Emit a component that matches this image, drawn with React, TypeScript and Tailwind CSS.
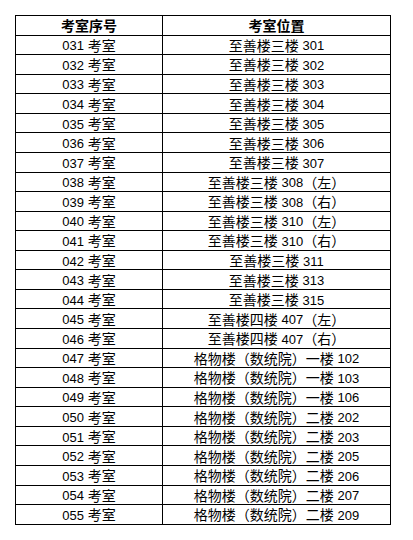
import { Fragment } from "react";

const rooms: [string, string][] = [
  ["031 考室", "至善楼三楼 301"],
  ["032 考室", "至善楼三楼 302"],
  ["033 考室", "至善楼三楼 303"],
  ["034 考室", "至善楼三楼 304"],
  ["035 考室", "至善楼三楼 305"],
  ["036 考室", "至善楼三楼 306"],
  ["037 考室", "至善楼三楼 307"],
  ["038 考室", "至善楼三楼 308（左）"],
  ["039 考室", "至善楼三楼 308（右）"],
  ["040 考室", "至善楼三楼 310（左）"],
  ["041 考室", "至善楼三楼 310（右）"],
  ["042 考室", "至善楼三楼 311"],
  ["043 考室", "至善楼三楼 313"],
  ["044 考室", "至善楼三楼 315"],
  ["045 考室", "至善楼四楼 407（左）"],
  ["046 考室", "至善楼四楼 407（右）"],
  ["047 考室", "格物楼（数统院）一楼 102"],
  ["048 考室", "格物楼（数统院）一楼 103"],
  ["049 考室", "格物楼（数统院）一楼 106"],
  ["050 考室", "格物楼（数统院）二楼 202"],
  ["051 考室", "格物楼（数统院）二楼 203"],
  ["052 考室", "格物楼（数统院）二楼 205"],
  ["053 考室", "格物楼（数统院）二楼 206"],
  ["054 考室", "格物楼（数统院）二楼 207"],
  ["055 考室", "格物楼（数统院）二楼 209"],
];

// digits are drawn a little smaller so they sit like the narrow figures in the sheet
const Cell = ({ text }: { text: string }) => (
  <>
    {text.split(/(\d+)/).map((part, i) =>
      /^\d+$/.test(part) ? (
        <span key={i} className="text-[13px]">
          {part}
        </span>
      ) : (
        <Fragment key={i}>{part}</Fragment>
      )
    )}
  </>
);

export default function App() {
  return (
    <div
      className="bg-white w-[413px] h-[540px] pt-[15px] pl-[15px] text-black text-[14px] leading-none"
      style={{ fontFamily: '"Liberation Sans", "Noto Sans CJK SC", sans-serif' }}
    >
      <div className="w-[376px] border-t border-l border-r border-black flex flex-col">
        {/* header */}
        <div className="flex h-[19.577px] border-b border-black font-bold">
          <div className="w-[147px] border-r border-black flex items-center justify-center pt-[2px]">
            考室序号
          </div>
          <div className="flex-1 flex items-center justify-center pt-[2px]">考室位置</div>
        </div>

        {rooms.map(([no, place]) => (
          <div key={no} className="flex h-[19.577px] border-b border-black">
            <div className="w-[147px] border-r border-black flex items-center justify-center pt-[2px] whitespace-pre">
              <Cell text={no} />
            </div>
            <div className="flex-1 flex items-center justify-center pt-[2px] whitespace-pre">
              <Cell text={place} />
            </div>
          </div>
        ))}
      </div>
    </div>
  );
}
